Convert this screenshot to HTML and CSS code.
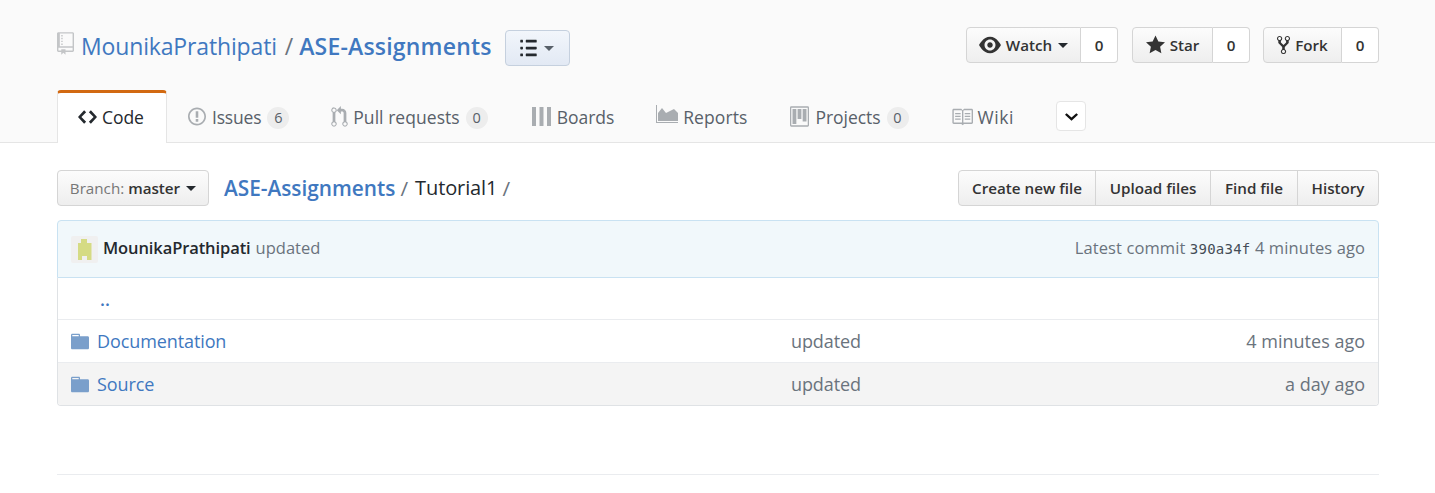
FILE: index.html
```html
<!DOCTYPE html>
<html lang="en">
<head>
    <meta charset="UTF-8">
    <meta name="viewport" content="width=device-width, initial-scale=1.0">
    <title>ASE-Assignments/Tutorial1</title>
    <link rel="stylesheet" href="styles.css">
</head>
<body>
    <div class="repohead">
        <div class="container headrow">
            <h1 class="title">
                <svg class="repo-icon" viewBox="0 0 12 16"><path d="M4 9H3V8h1v1zm0-3H3v1h1V6zm0-2H3v1h1V4zm0-2H3v1h1V2zm8-1v12c0 .55-.45 1-1 1H6v2l-1.5-1.5L3 16v-2H1c-.55 0-1-.45-1-1V1c0-.55.45-1 1-1h10c.55 0 1 .45 1 1zm-1 10H1v2h2v-1h3v1h5v-2zm0-10H2v9h9V1z"/></svg>
                <a href="#">MounikaPrathipati</a>
                <span class="sep">/</span>
                <a href="#" class="strong">ASE-Assignments</a>
            </h1>
            <button class="toc-btn">
                <svg class="toc-icon" viewBox="0 0 12 16"><path d="M2 13c0 .59 0 1-.59 1H.59C0 14 0 13.59 0 13c0-.59 0-1 .59-1h.81c.59 0 .59.41.59 1H2zm2.59-9h6.81c.59 0 .59-.41.59-1 0-.59 0-1-.59-1H4.59C4 2 4 2.41 4 3c0 .59 0 1 .59 1zM1.41 7H.59C0 7 0 7.41 0 8c0 .59 0 1 .59 1h.81c.59 0 .59-.41.59-1 0-.59 0-1-.59-1h.01zm0-5H.59C0 2 0 2.41 0 3c0 .59 0 1 .59 1h.81c.59 0 .59-.41.59-1 0-.59 0-1-.59-1h.01zm10 5H4.59C4 7 4 7.41 4 8c0 .59 0 1 .59 1h6.81c.59 0 .59-.41.59-1 0-.59 0-1-.59-1h.01zm0 5H4.59C4 12 4 12.41 4 13c0 .59 0 1 .59 1h6.81c.59 0 .59-.41.59-1 0-.59 0-1-.59-1h.01z"/></svg>
                <span class="caret caret-grey"></span>
            </button>
            <div class="actions">
                <div class="social">
                    <a class="btn w-watch"><svg class="ico ico-eye" viewBox="0 0 16 16"><path d="M8.06 2C3 2 0 8 0 8s3 6 8.06 6C13 14 16 8 16 8s-3-6-7.94-6zM8 12c-2.2 0-4-1.78-4-4 0-2.2 1.8-4 4-4 2.22 0 4 1.8 4 4 0 2.22-1.78 4-4 4zm2-4c0 1.11-.89 2-2 2-1.11 0-2-.89-2-2 0-1.11.89-2 2-2 1.11 0 2 .89 2 2z"/></svg>Watch<span class="caret"></span></a>
                    <a class="count">0</a>
                </div>
                <div class="social">
                    <a class="btn w-star"><svg class="ico ico-star" viewBox="0 0 14 16"><path d="M14 6l-4.9-.64L7 1 4.9 5.36 0 6l3.6 3.26L2.67 14 7 11.67 11.33 14l-.93-4.74L14 6z"/></svg>Star</a>
                    <a class="count">0</a>
                </div>
                <div class="social">
                    <a class="btn w-fork"><svg class="ico ico-fork" viewBox="0 0 10 16"><path d="M8 1a1.993 1.993 0 0 0-1 3.72V6L5 8 3 6V4.72A1.993 1.993 0 0 0 2 1a1.993 1.993 0 0 0-1 3.72V6.5l3 3v1.78A1.993 1.993 0 0 0 5 15a1.993 1.993 0 0 0 1-3.72V9.5l3-3V4.72A1.993 1.993 0 0 0 8 1zM2 4.2C1.34 4.2.8 3.65.8 3c0-.65.55-1.2 1.2-1.2.65 0 1.2.55 1.2 1.2 0 .65-.55 1.2-1.2 1.2zm3 10c-.66 0-1.2-.55-1.2-1.2 0-.65.55-1.2 1.2-1.2.65 0 1.2.55 1.2 1.2 0 .65-.55 1.2-1.2 1.2zm3-10c-.66 0-1.2-.55-1.2-1.2 0-.65.55-1.2 1.2-1.2.65 0 1.2.55 1.2 1.2 0 .65-.55 1.2-1.2 1.2z"/></svg>Fork</a>
                    <a class="count">0</a>
                </div>
            </div>
        </div>
        <nav class="container tabs">
            <a class="tab selected"><svg class="tab-icon i-code" viewBox="0 0 14 16"><path d="M9.5 3L8 4.5 11.5 8 8 11.5 9.5 13 14 8 9.5 3zm-5 0L0 8l4.5 5L6 11.5 2.5 8 6 4.5 4.5 3z"/></svg>Code</a>
            <a class="tab tab-issues"><svg class="tab-icon i-issue" viewBox="0 0 14 16"><path d="M7 2.3c3.14 0 5.7 2.56 5.7 5.7s-2.56 5.7-5.7 5.7A5.71 5.71 0 0 1 1.3 8c0-3.14 2.56-5.7 5.7-5.7zM7 1C3.14 1 0 4.14 0 8s3.14 7 7 7 7-3.14 7-7-3.14-7-7-7zm1 3H6v5h2V4zm0 6H6v2h2v-2z"/></svg>Issues<span class="badge">6</span></a>
            <a class="tab tab-pulls"><svg class="tab-icon i-pr" viewBox="0 0 12 16"><path d="M11 11.28V5c-.03-.78-.34-1.47-.94-2.06C9.46 2.35 8.78 2.03 8 2H7V0L4 3l3 3V4h1c.27.02.48.11.69.31.21.2.3.42.31.69v6.28A1.993 1.993 0 0 0 10 15a1.993 1.993 0 0 0 1-3.72zm-1 2.92c-.66 0-1.2-.55-1.2-1.2 0-.65.55-1.2 1.2-1.2.65 0 1.2.55 1.2 1.2 0 .65-.55 1.2-1.2 1.2zM4 3c0-1.11-.89-2-2-2a1.993 1.993 0 0 0-1 3.72v6.56A1.993 1.993 0 0 0 2 15a1.993 1.993 0 0 0 1-3.72V4.72c.59-.34 1-.98 1-1.72zm-.8 10c0 .66-.55 1.2-1.2 1.2-.65 0-1.2-.55-1.2-1.2 0-.65.55-1.2 1.2-1.2.65 0 1.2.55 1.2 1.2zM2 4.2C1.34 4.2.8 3.65.8 3c0-.65.55-1.2 1.2-1.2.65 0 1.2.55 1.2 1.2 0 .65-.55 1.2-1.2 1.2z"/></svg>Pull requests<span class="badge">0</span></a>
            <a class="tab"><svg class="tab-icon i-boards" viewBox="0 0 19 19"><path d="M0 0h4v19H0zM7.5 0h4v19h-4zM15 0h4v19h-4z"/></svg>Boards</a>
            <a class="tab tab-reports"><svg class="tab-icon i-reports" viewBox="0 0 22 18"><path d="M0 0h1v17h21v1H0z"/><path d="M2 16V8l4-5 4 5 4-2 4-2 4 4v8z"/></svg>Reports</a>
            <a class="tab"><svg class="tab-icon i-project" viewBox="0 0 15 16"><path d="M10 12h3V2h-3v10zm-4-2h3V2H6v8zm-4 4h3V2H2v12zm-1 1h13V1H1v14zM14 0H1a1 1 0 0 0-1 1v14a1 1 0 0 0 1 1h13a1 1 0 0 0 1-1V1a1 1 0 0 0-1-1z"/></svg>Projects<span class="badge">0</span></a>
            <a class="tab tab-wiki"><svg class="tab-icon i-book" viewBox="0 0 16 16"><path d="M3 5h4v1H3V5zm0 3h4V7H3v1zm0 2h4V9H3v1zm11-5h-4v1h4V5zm0 2h-4v1h4V7zm0 2h-4v1h4V9zm2-6v9c0 .55-.45 1-1 1H9.5l-1 1-1-1H2c-.55 0-1-.45-1-1V3c0-.55.45-1 1-1h5.5l1 1 1-1H15c.55 0 1 .45 1 1zm-8 .5L7.5 3H2v9h6V3.5zm7-.5H9.5l-.5.5V12h6V3z"/></svg>Wiki</a>
            <button class="more-btn"><svg viewBox="0 0 12 8"><path d="M1.5 1L6 5l4.5-4L12 2.4 6 8 0 2.4z"/></svg></button>
        </nav>
    </div>

    <div class="container main">
        <div class="file-nav">
            <button class="btn branch-btn"><span class="muted">Branch: </span>master<span class="caret"></span></button>
            <div class="breadcrumb">
                <a href="#">ASE-Assignments</a>
                <span class="sep">/</span>
                <span class="current">Tutorial1</span>
                <span class="sep">/</span>
            </div>
            <div class="btn-group">
                <a class="btn w-create">Create new file</a>
                <a class="btn w-upload">Upload files</a>
                <a class="btn w-find">Find file</a>
                <a class="btn w-history">History</a>
            </div>
        </div>

        <div class="commit-tease">
            <svg class="avatar" viewBox="0 0 27 27"><path fill="#f0f0f0" d="M0 2a2 2 0 0 1 2-2h23a2 2 0 0 1 2 2v23a2 2 0 0 1-2 2H2a2 2 0 0 1-2-2z"/><path fill="#d5db84" d="M10 3h6v4h4.5v17h-4.5v-4h-5v4H7V7h3z"/></svg>
            <a class="author">MounikaPrathipati</a>
            <span class="message">updated</span>
            <span class="latest">Latest commit <code>390a34f</code> 4 minutes ago</span>
        </div>

        <div class="files">
            <div class="file-row up"><a href="#" class="up-link">..</a></div>
            <div class="file-row">
                <svg class="folder" viewBox="0 0 14 16"><path d="M13 4H7V3c0-.66-.31-1-1-1H1c-.55 0-1 .45-1 1v10c0 .55.45 1 1 1h12c.55 0 1-.45 1-1V5c0-.55-.45-1-1-1zM6 4H1V3h5v1z"/></svg>
                <a href="#" class="name">Documentation</a>
                <span class="msg">updated</span>
                <span class="age">4 minutes ago</span>
            </div>
            <div class="file-row hover">
                <svg class="folder" viewBox="0 0 14 16"><path d="M13 4H7V3c0-.66-.31-1-1-1H1c-.55 0-1 .45-1 1v10c0 .55.45 1 1 1h12c.55 0 1-.45 1-1V5c0-.55-.45-1-1-1zM6 4H1V3h5v1z"/></svg>
                <a href="#" class="name">Source</a>
                <span class="msg">updated</span>
                <span class="age">a day ago</span>
            </div>
        </div>
        <div class="foot-rule"></div>
    </div>
</body>
</html>
```

FILE: styles.css
```css
body {
    font-family: "Open Sans", "Noto Sans", sans-serif;
    font-size: 17px;
    margin: 0;
    color: #24292e;
    background-color: #fff;
}
a {
    color: #4078c0;
    text-decoration: none;
}
button {
    font-family: inherit;
    cursor: pointer;
}
svg {
    fill-rule: evenodd;
}
.container {
    width: 1322px;
    margin-left: 57px;
}
.repohead {
    height: 142px;
    background-color: #fafafa;
    border-bottom: 1px solid #e5e5e5;
}
.headrow {
    display: flex;
    align-items: flex-start;
    padding-top: 27px;
    height: 63px;
    box-sizing: border-box;
}
.title {
    display: flex;
    align-items: center;
    margin: 0;
    height: 38px;
    font-size: 23px;
    font-weight: 400;
    letter-spacing: -0.15px;
    white-space: nowrap;
}
.title a {
    color: #4078c0;
}
.title .strong {
    font-weight: 600;
    letter-spacing: 0.2px;
}
.title .sep {
    color: #6a737d;
    margin: 0 6px 0 8px;
}
.repo-icon {
    width: 17px;
    height: 23px;
    margin-right: 7px;
    margin-top: -5px;
    fill: #c3c5c7;
}
.toc-btn {
    display: flex;
    align-items: center;
    justify-content: center;
    gap: 7px;
    width: 65px;
    height: 36px;
    margin: 3px 0 0 13px;
    padding: 0;
    border: 1px solid #c5d0de;
    border-radius: 4px;
    background-image: linear-gradient(#f2f6fb, #e2e9f4);
}
.toc-icon {
    width: 17px;
    height: 22px;
    fill: #24292e;
}
.caret {
    display: inline-block;
    margin-left: 6px;
    border-top: 5px solid #24292e;
    border-left: 5px solid transparent;
    border-right: 5px solid transparent;
}
.caret-grey {
    margin-left: 0;
    border-top-color: #586069;
}
.actions {
    display: flex;
    gap: 13px;
    margin-left: auto;
}
.social {
    display: flex;
    height: 36px;
}
.social:first-child {
    margin-right: 1px;
}
.btn {
    display: flex;
    align-items: center;
    justify-content: center;
    box-sizing: border-box;
    height: 36px;
    padding: 0;
    border: 1px solid #d5d5d5;
    border-radius: 4px;
    background-image: linear-gradient(#fcfcfc, #eee);
    color: #333;
    font-size: 15.2px;
    font-weight: 550;
    white-space: pre;
}
.social .btn {
    border-radius: 4px 0 0 4px;
}
.count {
    display: flex;
    align-items: center;
    justify-content: center;
    box-sizing: border-box;
    width: 37px;
    border: 1px solid #d5d5d5;
    border-left: 0;
    border-radius: 0 4px 4px 0;
    background: #fff;
    color: #333;
    font-size: 15.2px;
    font-weight: 550;
}
.w-watch { width: 115px; }
.w-star { width: 81px; }
.w-fork { width: 79px; }
.ico {
    fill: #333;
    margin-right: 5px;
}
.ico-eye { width: 22px; height: 22px; }
.ico-star { width: 19px; height: 22px; }
.ico-fork { width: 13px; height: 22px; }
.tabs {
    display: flex;
    align-items: flex-start;
    height: 79px;
    padding-top: 27px;
    box-sizing: border-box;
}
.tab {
    display: flex;
    align-items: center;
    box-sizing: border-box;
    height: 53px;
    padding: 0 21px;
    color: #586069;
    font-size: 17.5px;
    letter-spacing: -0.05px;
    white-space: pre;
}
.tabs .tab:first-child {
    width: 110px;
}
.tab.selected {
    height: 53px;
    background: #fff;
    color: #24292e;
    padding: 0 0 3px 20px;
    border: 1px solid #e5e5e5;
    border-top: 3px solid #d26911;
    border-bottom: 0;
    border-radius: 4px 4px 0 0;
}
.tab-issues { letter-spacing: -0.2px; }
.tab-pulls { letter-spacing: 0.05px; }
.tab-reports { letter-spacing: 0.1px; }
.tab-wiki { letter-spacing: 0.6px; }
.tab-icon {
    margin-right: 6px;
    fill: #a9adb1;
    flex: none;
}
.i-code { width: 19px; height: 22px; fill: #24292e; margin-right: 5px; }
.i-issue { width: 18px; height: 21px; }
.i-pr { width: 17px; height: 22px; margin-right: 5px; }
.i-boards { width: 19px; height: 19px; margin: 0 6px 0 2px; }
.i-reports { width: 22px; height: 18px; margin-right: 5px; margin-top: -5px; }
.i-project { width: 19px; height: 21px; margin-right: 7px; }
.i-book { width: 22px; height: 22px; margin-right: 5px; }
.badge {
    display: inline-block;
    box-sizing: border-box;
    min-width: 22px;
    height: 22px;
    margin-left: 6px;
    margin-top: 2px;
    padding: 0 6px;
    border-radius: 11px;
    background-color: rgba(27, 31, 35, 0.06);
    color: #586069;
    font-size: 14.5px;
    font-weight: 500;
    line-height: 22px;
    text-align: center;
    letter-spacing: 0;
}
.more-btn {
    display: flex;
    align-items: center;
    justify-content: center;
    width: 30px;
    height: 30px;
    margin: 11px 0 0 21px;
    padding: 0;
    border: 1px solid #e5e5e5;
    border-radius: 4px;
    background: #fff;
}
.more-btn svg {
    width: 13px;
    height: 9px;
    fill: #111;
}
.main {
    padding-top: 27px;
}
.file-nav {
    display: flex;
    align-items: center;
    height: 36px;
}
.branch-btn {
    width: 152px;
    font-family: inherit;
    cursor: pointer;
}
.muted {
    color: #777;
    font-weight: 400;
}
.breadcrumb {
    display: flex;
    margin-left: 15px;
    font-size: 20.8px;
    white-space: nowrap;
}
.breadcrumb a {
    font-weight: 600;
}
.breadcrumb .sep {
    color: #6a737d;
    margin: 0 7px 0 5px;
}
.breadcrumb .current {
    font-size: 20px;
    font-weight: 500;
    letter-spacing: -0.1px;
    line-height: 28px;
    color: #24292e;
}
.btn-group {
    display: flex;
    margin-left: auto;
}
.btn-group .btn {
    border-radius: 0;
    margin-left: -1px;
}
.btn-group .btn:first-child {
    border-radius: 4px 0 0 4px;
}
.btn-group .btn:last-child {
    border-radius: 0 4px 4px 0;
}
.w-create { width: 138px; }
.w-upload { width: 116px; }
.w-find { width: 88px; }
.w-history { width: 82px; }
.commit-tease {
    display: flex;
    align-items: center;
    box-sizing: border-box;
    height: 58px;
    margin-top: 14px;
    padding: 0 13px;
    border: 1px solid #c9e2f2;
    border-radius: 4px 4px 0 0;
    background-color: #f1f8fb;
    font-size: 16.5px;
    white-space: pre;
}
.avatar {
    width: 27px;
    height: 27px;
    margin-right: 5px;
}
.author {
    color: #24292e;
    font-weight: 600;
    letter-spacing: -0.1px;
    margin-bottom: 4px;
}
.message {
    margin-left: 5px;
    margin-bottom: 4px;
    color: #6a737d;
}
.latest {
    margin-left: auto;
    margin-bottom: 4px;
    color: #6a737d;
    letter-spacing: 0.1px;
}
code {
    font-family: "DejaVu Sans Mono", "Liberation Mono", monospace;
    font-size: 14px;
    letter-spacing: 0.25px;
    color: #444d56;
}
.files {
    border: 1px solid #dfe2e5;
    border-top: 0;
    border-radius: 0 0 4px 4px;
    overflow: hidden;
}
.file-row {
    display: flex;
    align-items: center;
    box-sizing: border-box;
    height: 43px;
    padding: 0 13px;
    border-top: 1px solid #eaecef;
    font-size: 18px;
    white-space: pre;
}
.file-row.up {
    height: 41px;
    border-top: 0;
    padding-left: 42px;
}
.file-row.hover {
    background-color: #f4f4f4;
}
.up-link {
    font-weight: 600;
}
.folder {
    width: 18px;
    height: 21px;
    margin-right: 8px;
    fill: #7a9fcb;
    flex: none;
}
.name {
    width: 694px;
    letter-spacing: -0.1px;
}
.msg {
    color: #6a737d;
    letter-spacing: -0.1px;
}
.age {
    margin-left: auto;
    color: #6a737d;
}
.foot-rule {
    margin-top: 68px;
    border-top: 1px solid #eaecef;
}
```
